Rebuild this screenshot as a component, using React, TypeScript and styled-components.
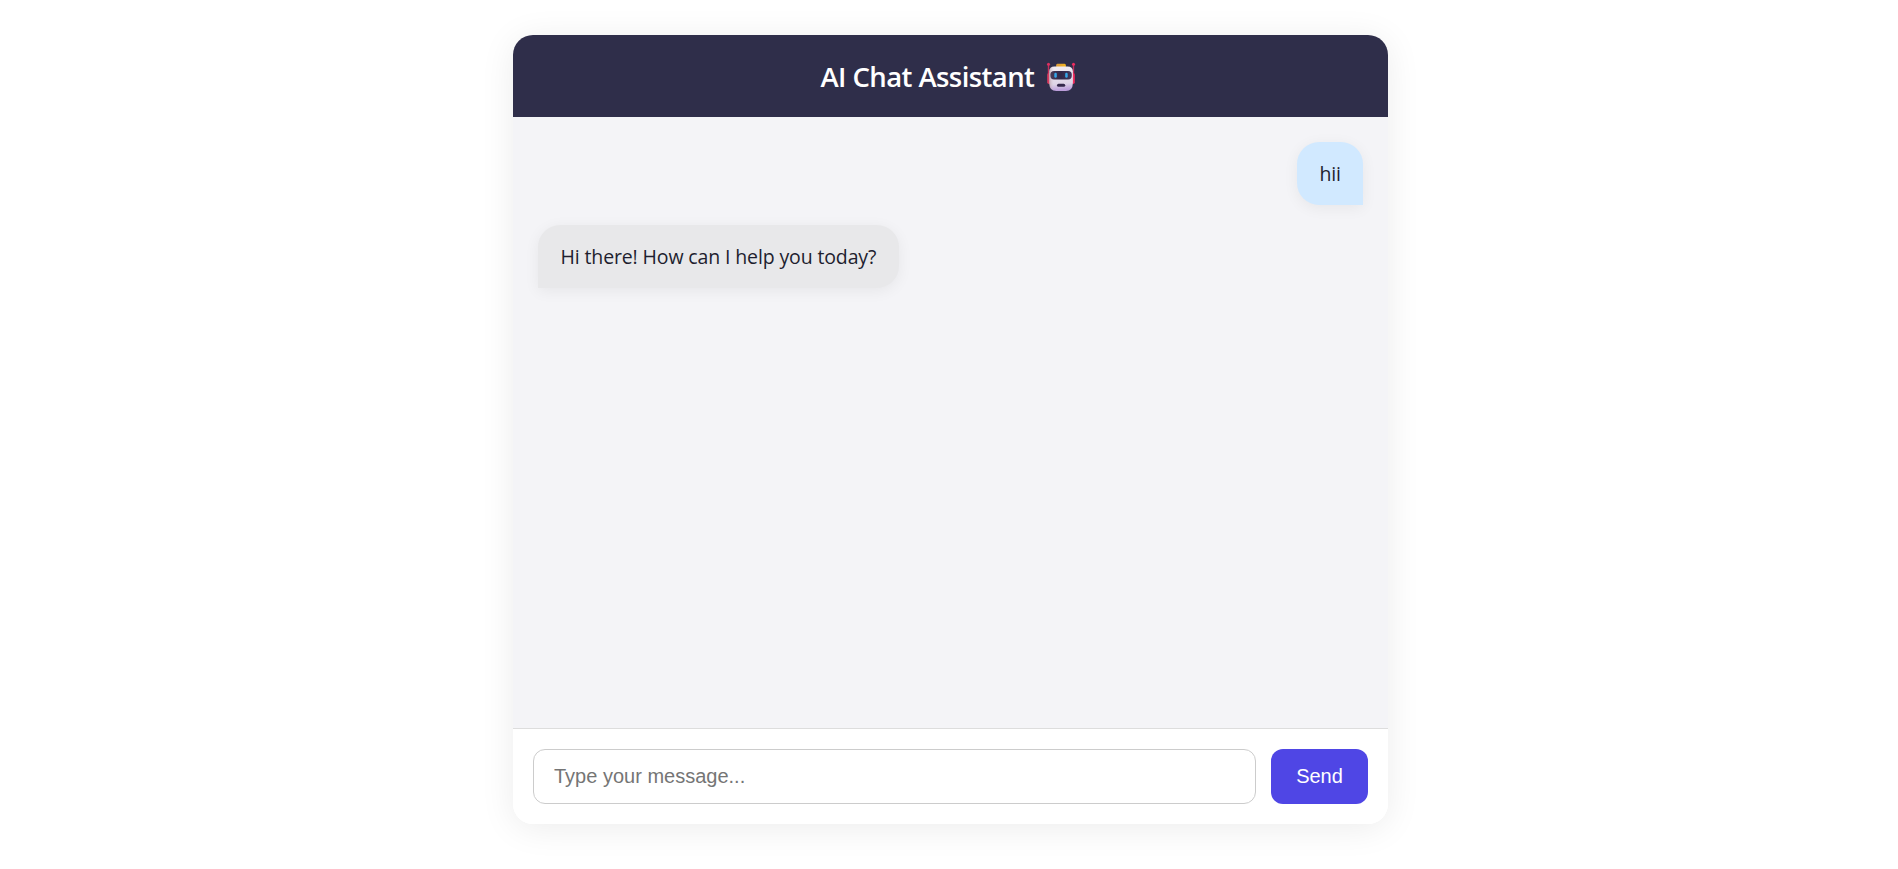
import React, { useState } from "react";
import styled, { createGlobalStyle } from "styled-components";

const GlobalStyle = createGlobalStyle`
  *, *::before, *::after { box-sizing: border-box; }
  body {
    margin: 0;
    background: #fff;
    font-family: "Segoe UI", "Open Sans", "Noto Sans", sans-serif;
    overflow: hidden;
  }
`;

const Page = styled.div`
  display: flex;
  justify-content: center;
  height: 869px;
  padding: 35px 0 45px 3px;
`;

const Card = styled.main`
  display: flex;
  flex-direction: column;
  width: 875px;
  height: 789px;
  overflow: hidden;
  border-radius: 20px;
  background: #fff;
  box-shadow: 0 4px 35px rgba(0, 0, 0, 0.08);
`;

const Header = styled.header`
  display: flex;
  align-items: center;
  justify-content: center;
  gap: 10px;
  flex: 0 0 82px;
  padding-right: 5px;
  background: #2f2e4a;
  color: #fff;
`;

const Title = styled.h1`
  margin: 0;
  padding-top: 2px;
  width: 215px;
  font-size: 27.5px;
  font-weight: 600;
  line-height: 38px;
  letter-spacing: -0.58px;
  white-space: nowrap;
`;

const Robot = styled.svg`
  display: block;
  width: 30px;
  height: 30px;
  margin-top: 2px;
`;

const Messages = styled.section`
  display: flex;
  flex: 1;
  flex-direction: column;
  gap: 20px;
  padding: 25px;
  background: #f4f4f7;
`;

const Bubble = styled.div<{ $user?: boolean }>`
  align-self: ${(p) => (p.$user ? "flex-end" : "flex-start")};
  width: ${(p) => (p.$user ? "66px" : "361px")};
  height: 63px;
  padding: 17px 0 0 22.5px;
  border-radius: ${(p) => (p.$user ? "22px 22px 0 22px" : "22px 22px 22px 0")};
  background: ${(p) => (p.$user ? "#d1e9ff" : "#e8e8ea")};
  color: #1e1e2f;
  box-shadow: 0 3px 15px rgba(0, 0, 0, 0.06);
  font-size: 19.5px;
  line-height: 30px;
  letter-spacing: -0.13px;
  white-space: nowrap;
`;

const Composer = styled.form`
  display: flex;
  flex: 0 0 96px;
  gap: 15px;
  padding: 20px;
  border-top: 1px solid #ddd;
  background: #fff;
`;

const MessageInput = styled.input`
  flex: 1;
  min-width: 0;
  height: 55px;
  padding: 0 20px;
  border: 1px solid #ccc;
  border-radius: 12px;
  outline: none;
  background: #fff;
  font: 20px "Liberation Sans", Arial, sans-serif;
  &::placeholder { color: #757575; }
`;

const SendButton = styled.button`
  width: 97px;
  height: 55px;
  padding: 0;
  border: 0;
  border-radius: 12px;
  background: #4f46e5;
  color: #fff;
  font: 20px "Liberation Sans", Arial, sans-serif;
  cursor: pointer;
`;

const RobotIcon = () => (
  <Robot viewBox="0 0 30 30" aria-hidden="true">
    <defs>
      <linearGradient id="face" x1="0" y1="0" x2="0.1" y2="1">
        <stop offset="0" stopColor="#f4eff4" />
        <stop offset="0.75" stopColor="#ded4e6" />
        <stop offset="1" stopColor="#bc9edb" />
      </linearGradient>
      <linearGradient id="side" x1="0" y1="0" x2="1" y2="0">
        <stop offset="0" stopColor="#a9858f" stopOpacity="0.55" />
        <stop offset="0.2" stopColor="#d9cbd7" stopOpacity="0" />
      </linearGradient>
      <linearGradient id="visor" x1="0" y1="0" x2="1" y2="0">
        <stop offset="0" stopColor="#4b3d58" />
        <stop offset="0.5" stopColor="#302748" />
        <stop offset="1" stopColor="#43395c" />
      </linearGradient>
      <linearGradient id="cap" x1="0" y1="0" x2="1" y2="0">
        <stop offset="0" stopColor="#d99b3e" />
        <stop offset="1" stopColor="#f5b51d" />
      </linearGradient>
    </defs>
    <path d="M2.5 2v10M27.5 2v10" stroke="#c2305c" strokeWidth="1.4" />
    <circle cx="2.5" cy="2.3" r="1.5" fill="#dc2f60" />
    <circle cx="27.5" cy="2.3" r="1.5" fill="#ee2d60" />
    <rect x="1.2" y="11" width="3.5" height="11" rx="1.7" fill="#d83b5f" />
    <rect x="25.3" y="11" width="3.5" height="11" rx="1.7" fill="#f22c5d" />
    <rect x="10.2" y="1.8" width="9.6" height="5" rx="1.4" fill="url(#cap)" />
    <path d="M8.5 4.5h13q5.2 0 5.4 5V21q-.2 8-7 8h-9.6q-6.8 0-7-8V9.5q.2-5 5.2-5z" fill="url(#face)" />
    <path d="M8.5 4.5h13q5.2 0 5.4 5V21q-.2 8-7 8h-9.6q-6.8 0-7-8V9.5q.2-5 5.2-5z" fill="url(#side)" />
    <rect x="4.4" y="9" width="21.4" height="8.4" rx="3.6" fill="url(#visor)" />
    <rect x="8.3" y="10.8" width="2.5" height="5" rx="1.2" fill="#35a6e9" />
    <rect x="19.2" y="10.8" width="2.5" height="5" rx="1.2" fill="#35a6e9" />
    <rect x="11" y="21.8" width="8.2" height="3" rx="1.5" fill="#34284b" />
  </Robot>
);

export default function App() {
  const [draft, setDraft] = useState("");
  return (
    <>
      <GlobalStyle />
      <Page>
        <Card>
          <Header>
            <Title>AI Chat Assistant</Title>
            <RobotIcon />
          </Header>
          <Messages>
            <Bubble $user>hii</Bubble>
            <Bubble>Hi there! How can I help you today?</Bubble>
          </Messages>
          <Composer onSubmit={(e) => e.preventDefault()}>
            <MessageInput
              placeholder="Type your message..."
              value={draft}
              onChange={(e) => setDraft(e.target.value)}
            />
            <SendButton type="submit">Send</SendButton>
          </Composer>
        </Card>
      </Page>
    </>
  );
}
